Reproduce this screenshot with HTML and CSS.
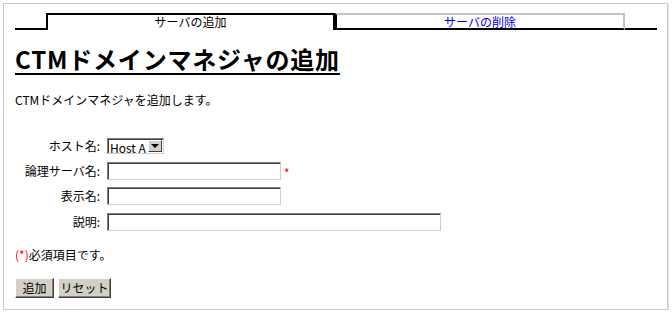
FILE: index.html
```html
<!DOCTYPE html>
<html lang="ja">
<head>
<meta charset="utf-8">
<title>CTMドメインマネジャの追加</title>
<link rel="stylesheet" href="styles.css">
</head>
<body>
<div class="frame">
  <div class="tabs">
    <span class="tab-lead"></span>
    <span class="tab tab-active">サーバの追加</span>
    <a class="tab tab-link" href="#">サーバの削除</a>
    <span class="tab-fill"></span>
  </div>
  <h1 class="title">CTMドメインマネジャの追加</h1>
  <p class="desc">CTMドメインマネジャを追加します。</p>
  <div class="form">
    <label class="lbl">ホスト名:</label>
    <div class="field">
      <span class="select-wrap"><select class="select"><option>Host A</option></select></span>
    </div>
    <label class="lbl">論理サーバ名:</label>
    <div class="field"><input class="input input-mid" type="text"><span class="req-mark">*</span></div>
    <label class="lbl">表示名:</label>
    <div class="field"><input class="input input-mid" type="text"></div>
    <label class="lbl">説明:</label>
    <div class="field"><input class="input input-wide" type="text"></div>
  </div>
  <p class="note"><span class="req">(*)</span>必須項目です。</p>
  <div class="buttons">
    <button class="btn btn-add" type="button">追加</button>
    <button class="btn btn-reset" type="button">リセット</button>
  </div>
</div>
</body>
</html>
```

FILE: styles.css
```css
html, body {
  margin: 0;
  padding: 0;
  background: #fff;
}
body {
  font-family: "Noto Sans CJK JP", "Liberation Sans", sans-serif;
  font-size: 12px;
  color: #000;
}
.frame {
  margin: 3px 0 0 3px;
  width: 665px;
  height: 307px;
  box-sizing: border-box;
  border: 1px solid #c8c8c8;
  box-shadow: 1px 1px 0 #e2e2e2;
  padding: 9px 0 0 11px;
}
.tabs {
  display: flex;
  width: 642px;
  height: 17px;
}
.tab-lead {
  width: 31px;
  border-bottom: 2px solid #000;
}
.tab {
  box-sizing: border-box;
  height: 17px;
  text-align: center;
  line-height: 14px;
  font-size: 12px;
}
.tab-active {
  width: 289px;
  border: 2px solid #000;
  border-bottom: none;
  color: #000;
}
.tab-link {
  width: 290px;
  border-top: 2px solid #c4c4c4;
  border-right: 2px solid #c4c4c4;
  border-left: 2px solid #000;
  border-bottom: 2px solid #000;
  color: #0000ff;
  text-decoration: none;
  line-height: 13px;
}
.tab-fill {
  flex: 1;
  border-bottom: 2px solid #000;
}
.title {
  display: inline-block;
  margin: 15px 0 0;
  font-size: 24px;
  line-height: 28px;
  font-weight: bold;
  letter-spacing: 0.8px;
  text-decoration: underline;
  text-decoration-thickness: 2px;
  text-underline-offset: 4px;
}
.desc {
  margin: 19px 0 0;
  line-height: 16px;
}
.form {
  margin-top: 26px;
  display: grid;
  grid-template-columns: 85px auto;
  grid-template-rows: 24px 25px 26px 26px;
  column-gap: 7px;
  align-items: center;
}
.lbl {
  text-align: right;
  white-space: nowrap;
  line-height: 16px;
}
.field {
  display: flex;
  align-items: center;
}
.input {
  box-sizing: border-box;
  height: 18px;
  margin: 0;
  padding: 0 2px;
  background: #fff;
  border: 1px solid;
  border-color: #808080 #d4d0c8 #d4d0c8 #808080;
  box-shadow: inset 1px 1px 0 #404040;
  font: inherit;
}
.input-mid { width: 174px; }
.input-wide { width: 334px; }
.req-mark {
  color: #ff0000;
  margin-left: 3px;
  font-size: 12px;
  line-height: 12px;
  padding-top: 4px;
}
.select-wrap {
  position: relative;
  display: inline-block;
  width: 57px;
  height: 16px;
  box-sizing: border-box;
  border: 1px solid;
  border-color: #808080 #d4d0c8 #d4d0c8 #808080;
  box-shadow: inset 1px 1px 0 #404040;
  background: #fff;
}
.select {
  appearance: none;
  -webkit-appearance: none;
  border: none;
  outline: none;
  background: transparent;
  margin: 0 0 0 1px;
  padding: 0 0 0 1px;
  width: 38px;
  height: 14px;
  font: inherit;
  font-size: 12px;
  line-height: 14px;
  color: #000;
}
.select-wrap::after {
  content: "";
  position: absolute;
  right: 1px;
  top: 1px;
  width: 14px;
  height: 12px;
  box-sizing: border-box;
  background: #d4d0c8;
  border: 1px solid;
  border-color: #fff #404040 #404040 #fff;
}
.select-wrap::before {
  content: "";
  position: absolute;
  right: 4px;
  top: 5px;
  width: 0;
  height: 0;
  border-left: 4px solid transparent;
  border-right: 4px solid transparent;
  border-top: 4px solid #000;
  z-index: 1;
}
.note {
  margin: 12px 0 0;
  line-height: 16px;
}
.req {
  color: #ff0000;
}
.buttons {
  margin-top: 15px;
  display: flex;
  gap: 4px;
}
.btn {
  box-sizing: border-box;
  height: 20px;
  margin: 0;
  padding: 0;
  background: #d4d0c8;
  border: 1px solid;
  border-color: #fff #404040 #404040 #fff;
  box-shadow: inset -1px -1px 0 #808080;
  font: inherit;
  font-size: 12px;
  line-height: 16px;
  color: #000;
}
.btn-add { width: 39px; }
.btn-reset { width: 53px; }
```
